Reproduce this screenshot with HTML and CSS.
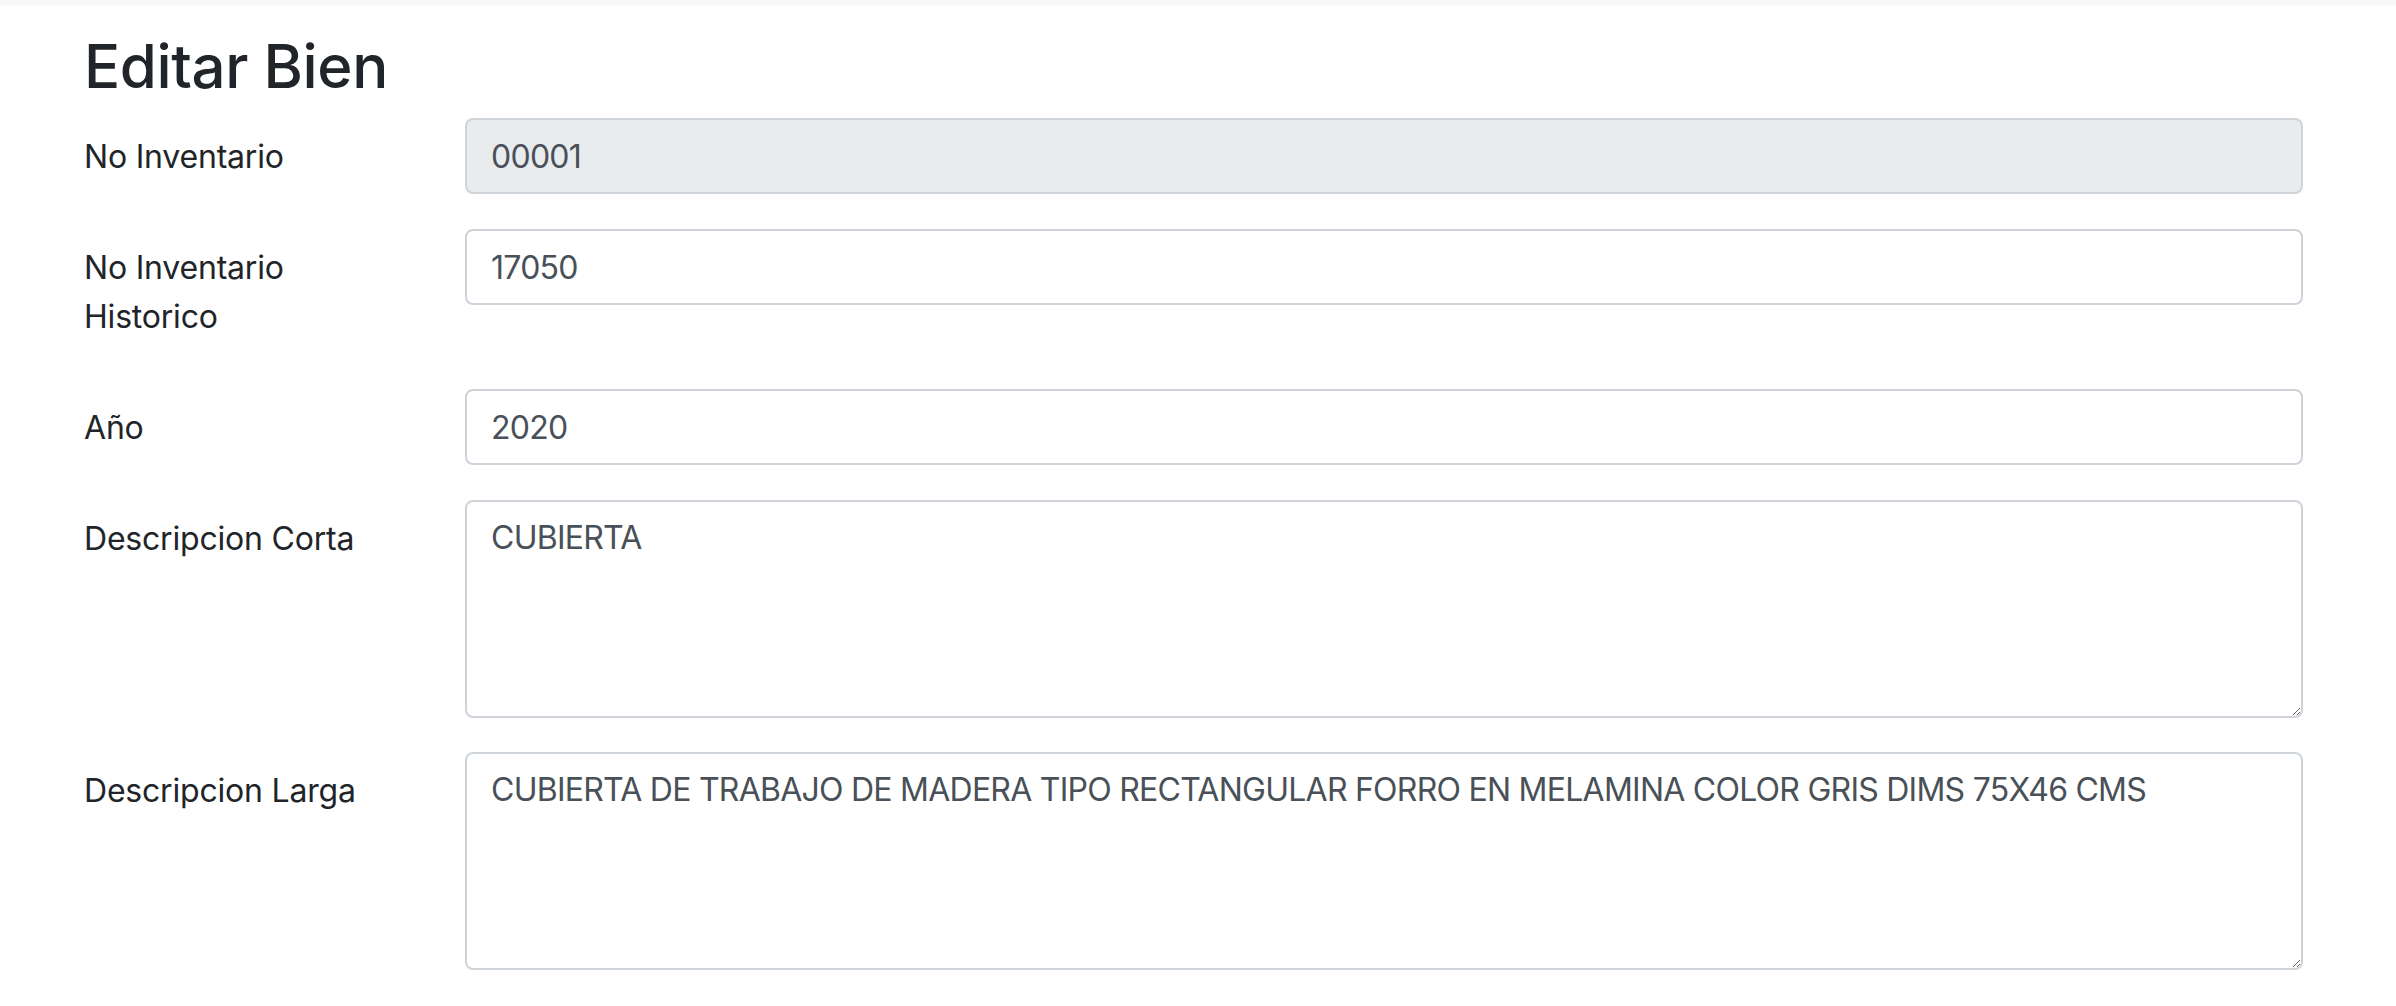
FILE: index.html
```html
<!DOCTYPE html>
<html lang="es">
<head>
<meta charset="utf-8">
<title>Editar Bien</title>
<link rel="stylesheet" href="styles.css">
</head>
<body>
<div class="topbar"></div>
<main class="container">
  <h2 class="title">Editar Bien</h2>
  <form class="form">
    <div class="form-row">
      <label class="form-label" for="inv">No Inventario</label>
      <div class="form-field">
        <input id="inv" class="form-control is-readonly" type="text" value="00001" readonly>
      </div>
    </div>
    <div class="form-row">
      <label class="form-label" for="hist">No Inventario Historico</label>
      <div class="form-field">
        <input id="hist" class="form-control" type="text" value="17050">
      </div>
    </div>
    <div class="form-row">
      <label class="form-label" for="anio">Año</label>
      <div class="form-field">
        <input id="anio" class="form-control" type="text" value="2020">
      </div>
    </div>
    <div class="form-row">
      <label class="form-label" for="corta">Descripcion Corta</label>
      <div class="form-field">
        <textarea id="corta" class="form-control form-textarea" rows="4">CUBIERTA</textarea>
      </div>
    </div>
    <div class="form-row">
      <label class="form-label" for="larga">Descripcion Larga</label>
      <div class="form-field">
        <textarea id="larga" class="form-control form-textarea" rows="4">CUBIERTA DE TRABAJO DE MADERA TIPO RECTANGULAR FORRO EN MELAMINA COLOR GRIS DIMS 75X46 CMS</textarea>
      </div>
    </div>
  </form>
</main>
</body>
</html>
```
FILE: styles.css
```css
* { box-sizing: border-box; }

html, body {
  margin: 0;
  padding: 0;
  background: #ffffff;
}

body {
  font-family: Inter, "Liberation Sans", Arial, sans-serif;
  font-size: 32px;
  line-height: 48px;
  color: #212529;
}

.topbar {
  height: 6px;
  background: #f8f9fa;
}

.container {
  padding: 0 93px 0 84px;
}

.title {
  margin: 24px 0 16px 0;
  font-size: 60px;
  line-height: 72px;
  font-weight: 500;
  letter-spacing: -0.4px;
  color: #212529;
}

.form {
  display: flex;
  flex-direction: column;
  gap: 34px;
}

.form-row {
  display: flex;
  align-items: flex-start;
}

.form-label {
  flex: 0 0 381px;
  padding: 14px 60px 14px 0;
  font-size: 32px;
  line-height: 49px;
  letter-spacing: -0.2px;
  color: #212529;
}

.form-field {
  flex: 1 1 auto;
  min-width: 0;
}

.form-control {
  display: block;
  width: 100%;
  height: 76px;
  margin: 0;
  padding: 12px 24px;
  font-family: Inter, "Liberation Sans", Arial, sans-serif;
  font-size: 32px;
  line-height: 48px;
  letter-spacing: -0.75px;
  color: #495057;
  background: #ffffff;
  border: 2px solid #ced4da;
  border-radius: 8px;
  outline: none;
}

.is-readonly {
  background: #e9ecef;
}

.form-textarea {
  height: 218px;
  resize: vertical;
  overflow: auto;
}
```
